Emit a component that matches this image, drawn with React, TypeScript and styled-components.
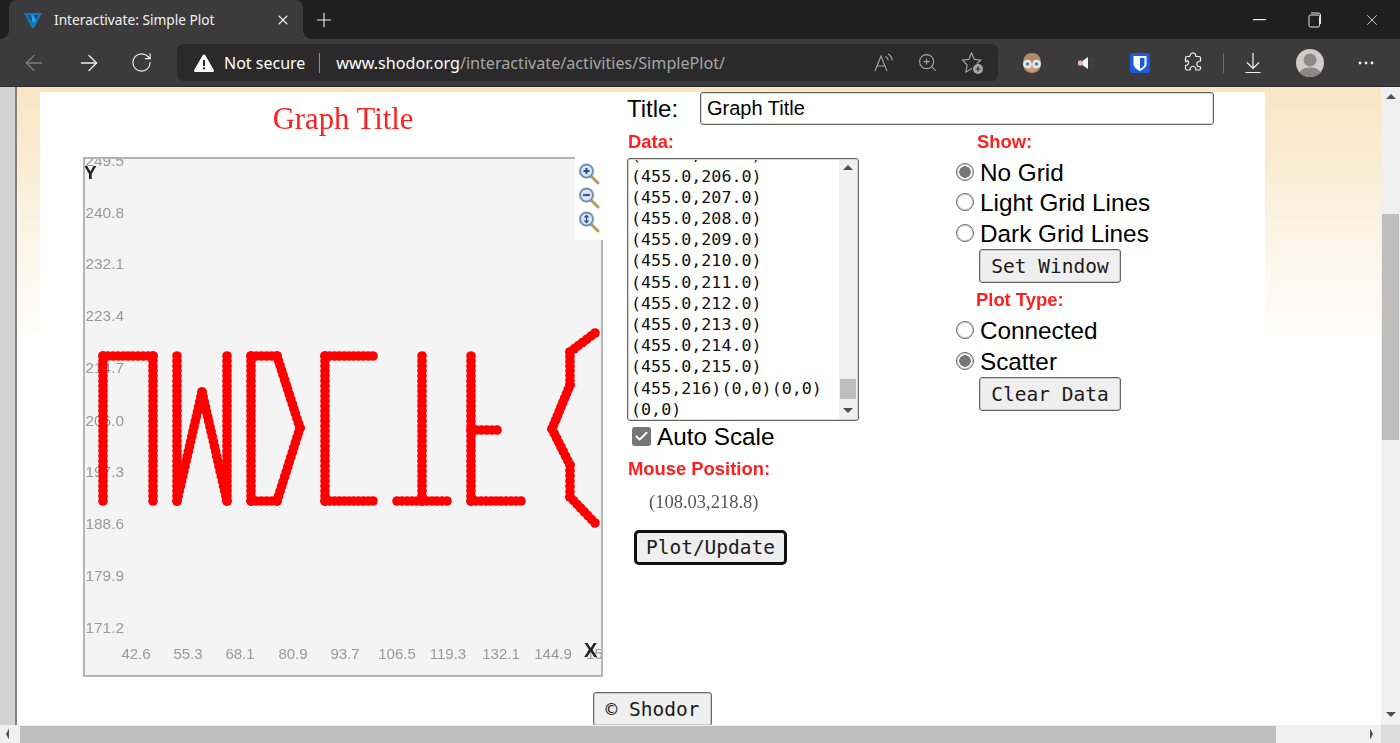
import React from 'react'
import styled, { createGlobalStyle } from 'styled-components'
import { ArrowLeft, ArrowRight, RotateCw, Plus, X, Check, ZoomIn } from 'lucide-react'

const GlobalStyle = createGlobalStyle`
  html, body {
    margin: 0;
    padding: 0;
    width: 1400px;
    height: 743px;
    overflow: hidden;
    background: #fff;
  }
  * { box-sizing: border-box; }
`

const MONO = `"DejaVu Sans Mono", "Liberation Mono", monospace`
const SANS = `"Liberation Sans", Arial, sans-serif`
const UI = `"Noto Sans", "Open Sans", sans-serif`

const Shell = styled.div`
  width: 1400px;
  height: 743px;
  display: flex;
  flex-direction: column;
  overflow: hidden;
  font-family: ${SANS};
`

/* browser chrome */
const TabStrip = styled.div`
  height: 39px;
  flex: none;
  background: #1f1f1f;
  display: flex;
  align-items: flex-end;
  padding-left: 9px;
  color: #fff;
`

const Tab = styled.div`
  position: relative;
  width: 294px;
  height: 39px;
  background: #3b3b3b;
  border-radius: 8px 8px 0 0;
  display: flex;
  align-items: center;
  padding-left: 15px;
  gap: 12px;

  &::before,
  &::after {
    content: '';
    position: absolute;
    bottom: 0;
    width: 8px;
    height: 8px;
  }
  &::before {
    left: -8px;
    background: radial-gradient(circle at 0 0, transparent 7.5px, #3b3b3b 8px);
  }
  &::after {
    right: -8px;
    background: radial-gradient(circle at 100% 0, transparent 7.5px, #3b3b3b 8px);
  }
`

const TabTitle = styled.span`
  flex: 1;
  font: 13.7px ${UI};
  color: #f2f2f2;
  white-space: nowrap;
`

const TabClose = styled.span`
  display: flex;
  margin-right: 12px;
`

const NewTab = styled.span`
  display: flex;
  margin: 0 0 8px 10px;
`

const WindowControls = styled.div`
  margin-left: auto;
  display: flex;
  align-items: center;
  height: 39px;
`

const WindowButton = styled.span<{ $w: number }>`
  width: ${p => p.$w}px;
  display: flex;
  justify-content: center;
`

const Toolbar = styled.div`
  height: 48px;
  flex: none;
  background: #3b3b3b;
  display: flex;
  align-items: center;
  border-bottom: 1px solid #2a2a2a;
`

const NavButton = styled.span<{ $w: number }>`
  width: ${p => p.$w}px;
  display: flex;
  justify-content: center;
  flex: none;
`

const AddressBar = styled.div`
  width: 821px;
  height: 37px;
  margin-left: 5px;
  background: #2a2a2a;
  border-radius: 6px;
  display: flex;
  align-items: center;
  padding-left: 17px;
  color: #fff;
  font: 16px ${UI};
`

const NotSecure = styled.span`
  margin-left: 10px;
  font-size: 16px;
  white-space: nowrap;
`

const Divider = styled.span`
  width: 1px;
  height: 20px;
  background: #8a8a8a;
  margin: 0 16px 0 14px;
`

const Url = styled.span`
  font-size: 16.15px;
  color: #fff;
  white-space: nowrap;
`

const UrlPath = styled.span`
  color: #a6a6a6;
`

const AddressIcons = styled.div`
  margin-left: auto;
  display: flex;
  align-items: center;
  gap: 23px;
  padding-right: 13px;
`

const ExtensionIcons = styled.div`
  display: flex;
  align-items: center;
`

const ExtensionSlot = styled.span<{ $w: number }>`
  width: ${p => p.$w}px;
  display: flex;
  justify-content: center;
  align-items: center;
  flex: none;
`

const ToolbarRule = styled.span`
  width: 1px;
  height: 20px;
  background: #6a6a6a;
  flex: none;
`

/* page viewport */
const Viewport = styled.div`
  flex: 1;
  min-height: 0;
  display: grid;
  grid-template-columns: 1381px 19px;
  grid-template-rows: 638px 18px;
`

const PageRow = styled.div`
  display: flex;
  overflow: hidden;
  min-height: 0;
`

const Gutter = styled.div`
  width: 17px;
  flex: none;
  background: #d3d3d3;
  border-right: 2px solid #808080;
`

const Page = styled.div`
  flex: 1;
  padding: 5px 0 0 23px;
  background: linear-gradient(#f9e5c2, #fefdfb) no-repeat;
  background-size: 100% 243px;
`

const Content = styled.div`
  width: 1225px;
  background: #fff;
`

const Columns = styled.div`
  display: flex;
  align-items: flex-start;
`

const PlotColumn = styled.div`
  width: 587px;
  padding-left: 43px;
  flex: none;
`

const GraphTitle = styled.h1`
  width: 520px;
  height: 52px;
  margin: 0 0 13px;
  padding-top: 2px;
  display: flex;
  align-items: center;
  justify-content: center;
  font: 400 30.7px "Liberation Serif", "Times New Roman", serif;
  color: #ff2020;
  filter: blur(0.3px);
`

const PlotBox = styled.div`
  position: relative;
  width: 520px;
  height: 520px;
  border: 2px solid #b4b4b4;
  background: #f4f4f4;
  overflow: visible;
`

const PlotSvg = styled.svg`
  display: block;
  filter: blur(0.45px);
`

const ZoomTools = styled.div`
  position: absolute;
  top: -2px;
  right: -2px;
  width: 28px;
  height: 83px;
  background: #fff;
  display: flex;
  flex-direction: column;
  align-items: center;
  gap: 1px;
  padding-top: 5px;
  filter: blur(0.4px);
`

const FormColumn = styled.div`
  flex: 1;
`

const TitleRow = styled.div`
  display: flex;
  align-items: center;
  height: 33px;
`

const TitleLabel = styled.label`
  width: 73px;
  font-size: 24px;
  color: #000;
`

const TitleInput = styled.input`
  width: 514px;
  height: 33px;
  border: 1px solid #666;
  box-shadow: inset 0 0 0 1px rgba(118, 118, 118, 0.3);
  border-radius: 3px;
  padding: 0 6px;
  font: 20px ${SANS};
  color: #000;
  background: #fff;
  outline: none;
`

const FormGrid = styled.div`
  display: grid;
  grid-template-columns: 329px 1fr;
`

const RedLabel = styled.div<{ $indent?: number; $mt?: number }>`
  height: 20px;
  line-height: 20px;
  font-weight: 700;
  font-size: 18.4px;
  color: #ff1f1f;
  padding-left: ${p => p.$indent ?? 1}px;
  margin-top: ${p => p.$mt ?? 0}px;
  filter: blur(0.35px);
  white-space: nowrap;
`

const DataCol = styled.div`
  padding-left: 0;
`

const DataBox = styled.div`
  width: 232px;
  height: 263px;
  margin-top: 6px;
  border: 1px solid #666;
  box-shadow: inset 0 0 0 1px rgba(118, 118, 118, 0.3);
  border-radius: 3px;
  display: flex;
  overflow: hidden;
  background: #fff;
  padding: 1px 1px 0;
`

const DataLines = styled.div`
  flex: 1;
  display: flex;
  flex-direction: column;
  justify-content: flex-end;
  overflow: hidden;
  padding: 0 0 0 2px;
  font: 16.7px/21.2px ${MONO};
  color: #111;
  white-space: pre;
`

const Scrollbar = styled.div`
  width: 18px;
  flex: none;
  background: #f0f0f0;
  display: flex;
  flex-direction: column;
  align-items: center;
  margin-bottom: 1px;
`

const ArrowCell = styled.div`
  height: 17px;
  flex: none;
  display: flex;
  align-items: center;
  justify-content: center;
`

const ScrollTrack = styled.div`
  flex: 1;
  align-self: stretch;
  display: flex;
  flex-direction: column;
  justify-content: flex-end;
  padding: 0 1px 3px;
`

const InnerThumb = styled.div`
  height: 20px;
  background: #bebebe;
`

const AutoRow = styled.label`
  display: flex;
  align-items: center;
  height: 30px;
  padding: 2px 0 0 5px;
  gap: 6px;
  font-size: 24.3px;
  color: #000;
`

const CheckMark = styled.span`
  width: 19px;
  height: 19px;
  border-radius: 3px;
  background: #767676;
  display: flex;
  align-items: center;
  justify-content: center;
  margin-top: -2px;
`

const MousePos = styled.div`
  height: 20px;
  margin-top: 13px;
  padding-left: 22px;
  font: 18.5px/20px "Liberation Serif", serif;
  color: #555;
  filter: blur(0.45px);
`

const MonoButton = styled.button<{ $focus?: boolean; $ml: number; $w: number }>`
  display: block;
  width: ${p => p.$w}px;
  height: ${p => (p.$focus ? 35 : 34)}px;
  margin-left: ${p => p.$ml}px;
  padding: 0;
  border: ${p => (p.$focus ? '3px solid #111' : '1px solid #666')};
  box-shadow: ${p => (p.$focus ? 'none' : 'inset 0 0 0 1px rgba(118, 118, 118, 0.3)')};
  border-radius: ${p => (p.$focus ? 5 : 3)}px;
  background: #efefef;
  color: #1a1a1a;
  font: 19.5px ${MONO};
  white-space: nowrap;
`

const PlotButtonWrap = styled.div`
  margin-top: 18px;
`

const ShowCol = styled.div`
  padding-top: 7px;
`

const RadioRow = styled.label`
  display: flex;
  align-items: center;
  height: 30.5px;
  gap: 6px;
  font-size: 24.3px;
  color: #000;
  white-space: nowrap;
`

const Radio = styled.input.attrs({ type: 'radio' })`
  appearance: none;
  width: 18px;
  height: 18px;
  margin: -2px 0 0;
  border: 1px solid #666;
  box-shadow: inset 0 0 0 1px rgba(118, 118, 118, 0.3);
  border-radius: 50%;
  background: #fff;

  &:checked {
    background: radial-gradient(circle, #767676 0 5.5px, #fff 6px);
  }
`

const RadioGroup = styled.div<{ $mt: number }>`
  margin-top: ${p => p.$mt}px;
`

const Footer = styled.div`
  display: flex;
  justify-content: center;
  margin-top: 15px;
`

const VBar = styled.div`
  background: #f0f0f0;
  display: flex;
  flex-direction: column;
  align-items: center;
  padding-top: 5px;
`

const VThumbSpace = styled.div`
  height: 110px;
  flex: none;
`

const VThumb = styled.div`
  width: 17px;
  height: 226px;
  flex: none;
  align-self: flex-start;
  margin-left: 1px;
  background: #bebebe;
`

const VEnd = styled.div`
  margin-top: auto;
  padding-bottom: 4px;
  display: flex;
`

const HBar = styled.div`
  background: #f0f0f0;
  display: flex;
  align-items: center;
  padding-left: 2px;
`

const HThumb = styled.div`
  width: 1256px;
  height: 17px;
  margin-left: 6px;
  background: #bebebe;
`

const HEnd = styled.div`
  margin-left: auto;
  padding-right: 4px;
  display: flex;
`

const Corner = styled.div`
  background: #dcdcdc;
`

type Pt = [number, number]

const PATHS: Pt[][] = [
  [[103, 501], [103, 356], [153, 356], [153, 501]],
  [[177, 356], [177, 501], [202, 392], [227, 501], [227, 356]],
  [[251, 356], [277, 356], [300, 428], [277, 501], [251, 501], [251, 356]],
  [[373, 356], [325, 356], [325, 501], [373, 501]],
  [[422, 356], [422, 501]],
  [[397, 501], [447, 501]],
  [[471, 356], [471, 501], [521, 501]],
  [[471, 430], [497, 430]],
  [[595, 333], [570, 352], [570, 385], [552, 429], [570, 465], [570, 497], [595, 523]],
]

const sample = (pts: Pt[], step = 5): Pt[] => {
  const out: Pt[] = []
  for (let i = 0; i < pts.length - 1; i++) {
    const [x1, y1] = pts[i]
    const [x2, y2] = pts[i + 1]
    const n = Math.max(1, Math.round(Math.hypot(x2 - x1, y2 - y1) / step))
    for (let k = 0; k <= n; k++) out.push([x1 + ((x2 - x1) * k) / n, y1 + ((y2 - y1) * k) / n])
  }
  return out
}

const Y_LABELS: [string, number][] = [
  ['249.5', 161], ['240.8', 213], ['232.1', 264], ['223.4', 316], ['214.7', 368],
  ['206.0', 421], ['197.3', 472], ['188.6', 524], ['179.9', 576], ['171.2', 628],
]

const X_LABELS: [string, number][] = [
  ['42.6', 136], ['55.3', 188], ['68.1', 240], ['80.9', 293], ['93.7', 345],
  ['106.5', 397], ['119.3', 448], ['132.1', 501], ['144.9', 553], ['157.7', 605],
]

const Lens = ({ kind }: { kind: 'plus' | 'minus' | 'fit' }) => (
  <svg width="22" height="23" viewBox="0 0 22 23">
    <path d="M13 14l7 7" stroke="#b59a5c" strokeWidth="3" strokeLinecap="round" />
    <circle cx="8.5" cy="9" r="6.5" fill="#dbe6f5" stroke="#6f8fb8" strokeWidth="2" />
    {kind === 'plus' && <path d="M5.5 9h6M8.5 6v6" stroke="#24508f" strokeWidth="2" />}
    {kind === 'minus' && <path d="M5 9h7" stroke="#3d5f8f" strokeWidth="2.2" />}
    {kind === 'fit' && <path d="M8.5 5.5v7M6.5 7.5l2-2 2 2M6.5 10.5l2 2 2-2" stroke="#24508f" strokeWidth="1.3" fill="none" />}
  </svg>
)

const Plot = () => (
  <PlotBox>
    <PlotSvg width="516" height="516" viewBox="85 159 516 516">
      {Y_LABELS.map(([t, y]) => (
        <text key={t} x="124" y={y + 5} textAnchor="end" fontFamily={SANS} fontSize="15.4" fill="#999">
          {t}
        </text>
      ))}
      {X_LABELS.map(([t, x]) => (
        <text key={t} x={x} y="659" textAnchor="middle" fontFamily={SANS} fontSize="15" fill="#999">
          {t}
        </text>
      ))}
      <text x="84" y="179" fontFamily={SANS} fontSize="19" fontWeight="700" fill="#222">Y</text>
      <text x="584" y="657" fontFamily={SANS} fontSize="20" fontWeight="700" fill="#222">X</text>
      {PATHS.flatMap((p, i) =>
        sample(p).map(([x, y], k) => <circle key={`${i}-${k}`} cx={x} cy={y} r="4.8" fill="#ff0000" />),
      )}
    </PlotSvg>
    <ZoomTools>
      <Lens kind="plus" />
      <Lens kind="minus" />
      <Lens kind="fit" />
    </ZoomTools>
  </PlotBox>
)

const Triangle = ({ dir }: { dir: 'up' | 'down' | 'left' | 'right' }) => {
  const d = {
    up: 'M1 7L6 2l5 5z',
    down: 'M1 3l5 5 5-5z',
    left: 'M7 0.5v11L4 6z',
    right: 'M5 0.5v11L8 6z',
  }[dir]
  return (
    <svg width="12" height="12" viewBox="0 0 12 12">
      <path d={d} fill="#505050" />
    </svg>
  )
}

const Favicon = () => (
  <svg width="18" height="18" viewBox="0 0 18 18">
    <path d="M0 2h18L10 17H8z" fill="#1179c4" />
    <path d="M3.500 4h11L9 13z" fill="#0c4f85" />
    <path d="M9 13L7 4h2l3 5z" fill="#28a4e8" />
  </svg>
)

const RestoreIcon = () => (
  <svg width="14" height="16" viewBox="0 0 14 16" fill="none" stroke="#e6e6e6" strokeWidth="1">
    <rect x="1" y="3" width="10.500" height="12" rx="1.500" />
    <path d="M3 1h7.500a2 2 0 0 1 2 2v9" />
  </svg>
)

const MinimizeIcon = () => (
  <svg width="13" height="2" viewBox="0 0 13 2">
    <rect width="13" height="1.200" fill="#f0f0f0" />
  </svg>
)

const WarnIcon = () => (
  <svg width="20" height="18" viewBox="0 0 20 18">
    <path d="M10 0.500a1.500 1.500 0 0 1 1.300.8l8.400 14.500a1.400 1.400 0 0 1-1.200 2.200H1.500a1.400 1.400 0 0 1-1.200-2.200L8.700 1.300A1.500 1.500 0 0 1 10 0.500z" fill="#fff" />
    <path d="M9 6h2v6H9zM9 13.300h2v2H9z" fill="#2a2a2a" />
  </svg>
)

const ReadAloudIcon = () => (
  <svg width="20" height="20" viewBox="0 0 20 20" fill="none" stroke="#a8a8a8" strokeWidth="1.100">
    <path d="M1 18L7 3l6 15M3.200 13h7.600" />
    <path d="M11.500 3.500c1.600.8 2.600 2.200 2.800 4M14 1c2.400 1.200 4 3.400 4.200 6.500" />
  </svg>
)

const StarAddIcon = () => (
  <svg width="24" height="24" viewBox="0 0 24 24" fill="none">
    <path d="M11 17.500L4.800 21l1.400-7-4.700-4.800 6.500-.9L10.500 2l2.800 6.300 6.500.9-3.800 3.300" stroke="#a8a8a8" strokeWidth="1.100" />
    <circle cx="17" cy="18" r="5" fill="#a8a8a8" />
    <path d="M17 15.500v5M14.500 18h5" stroke="#2a2a2a" strokeWidth="1.200" />
  </svg>
)

const AvatarIcon = () => (
  <svg width="22" height="24" viewBox="0 0 22 24">
    <path d="M2 12C2 5 6 2 11 2s9 3 9 10-4 10-9 10S2 19 2 12z" fill="#b08a63" />
    <path d="M5 13c0 5 3 8 6 8s6-3 6-8z" fill="#d99a78" />
    <circle cx="6.500" cy="13" r="3.600" fill="#b7dbe0" stroke="#eef5f5" strokeWidth="1.400" />
    <circle cx="15.500" cy="13" r="3.600" fill="#b7dbe0" stroke="#eef5f5" strokeWidth="1.400" />
    <circle cx="6.500" cy="13" r="1.200" fill="#3a4a50" />
    <circle cx="15.500" cy="13" r="1.200" fill="#3a4a50" />
  </svg>
)

const SpeakerIcon = () => (
  <svg width="18" height="14" viewBox="-2 0 18 14">
    <rect x="1" y="4.500" width="5" height="5" rx="1.500" fill="#efb7c0" />
    <path d="M6 4.500L11 1v12L6 9.500z" fill="#f4f4f4" />
    <path d="M13 5l2-1M13 9l2 1" stroke="#555" strokeWidth="1" />
  </svg>
)

const BitwardenIcon = () => (
  <svg width="20" height="20" viewBox="0 0 20 20">
    <rect width="20" height="20" rx="2" fill="#175ddc" />
    <path d="M3.500 3h13v8c0 3.500-3.500 5.500-6.500 7-3-1.500-6.500-3.500-6.500-7z" fill="#fff" />
    <path d="M10 5h4.500v6c0 2-2.500 3.800-4.500 4.800z" fill="#175ddc" />
  </svg>
)

const PuzzleIcon = () => (
  <svg width="20" height="21" viewBox="0 0 20 21" fill="none" stroke="#f2f2f2" strokeWidth="1.200">
    <path d="M7 3.500a3 3 0 0 1 5.500-1.200c.5 1 0 1.700.5 2.200h3c1 0 1.500.5 1.500 1.500v3c-.5.500-1.200 0-2.200.5a2.800 2.800 0 0 0 0 5c1 .5 1.700 0 2.200.5v1.500c0 1-.5 1.500-1.500 1.500h-3c-.5-.5 0-1.200-.5-2.200a2.800 2.800 0 0 0-5 0c-.5 1 0 1.700-.5 2.200H4c-1 0-1.500-.5-1.500-1.500v-3c.5-.5 1.200 0 2-.7a2.700 2.700 0 0 0 0-4.300C3.700 9.500 3 10 2.500 9.500V6c0-1 .5-1.500 1.500-1.500h2.500c.5-.2.500-.5.500-1z" />
  </svg>
)

const DownloadIcon = () => (
  <svg width="18" height="22" viewBox="0 0 18 22" fill="none" stroke="#f2f2f2" strokeWidth="1.200">
    <path d="M9 1v15M3 10.500l6 6 6-6M1.500 20.500h15" />
  </svg>
)

const ProfileIcon = () => (
  <svg width="28" height="28" viewBox="0 0 28 28">
    <circle cx="14" cy="14" r="14" fill="#cfcdca" />
    <circle cx="14" cy="11" r="6.500" fill="#8b8986" />
    <path d="M3.500 23.500C5.500 19.500 9.500 18.500 14 18.500s8.500 1 10.500 5a14 14 0 0 1-21 0z" fill="#8b8986" />
  </svg>
)

const MoreIcon = () => (
  <svg width="16" height="4" viewBox="0 0 16 4">
    <circle cx="2" cy="2" r="1.400" fill="#f2f2f2" />
    <circle cx="8" cy="2" r="1.400" fill="#f2f2f2" />
    <circle cx="14" cy="2" r="1.400" fill="#f2f2f2" />
  </svg>
)

const DATA_LINES = [
  '(455.0,205.0)',
  '(455.0,206.0)',
  '(455.0,207.0)',
  '(455.0,208.0)',
  '(455.0,209.0)',
  '(455.0,210.0)',
  '(455.0,211.0)',
  '(455.0,212.0)',
  '(455.0,213.0)',
  '(455.0,214.0)',
  '(455.0,215.0)',
  '(455,216)(0,0)(0,0)',
  '(0,0)',
]

export default function App() {
  return (
    <Shell>
      <GlobalStyle />
      <TabStrip>
        <Tab>
          <Favicon />
          <TabTitle>Interactivate: Simple Plot</TabTitle>
          <TabClose>
            <X size={16} color="#f0f0f0" strokeWidth={1.6} />
          </TabClose>
        </Tab>
        <NewTab>
          <Plus size={22} color="#f0f0f0" strokeWidth={1.2} />
        </NewTab>
        <WindowControls>
          <WindowButton $w={56}><MinimizeIcon /></WindowButton>
          <WindowButton $w={56}><RestoreIcon /></WindowButton>
          <WindowButton $w={57}><X size={18} color="#e6e6e6" strokeWidth={1.1} /></WindowButton>
        </WindowControls>
      </TabStrip>
      <Toolbar>
        <NavButton $w={68}><ArrowLeft size={26} color="#7d7d7d" strokeWidth={1.2} /></NavButton>
        <NavButton $w={42}><ArrowRight size={26} color="#f0f0f0" strokeWidth={1.2} /></NavButton>
        <NavButton $w={62}><RotateCw size={23} color="#f0f0f0" strokeWidth={1.2} /></NavButton>
        <AddressBar>
          <WarnIcon />
          <NotSecure>Not secure</NotSecure>
          <Divider />
          <Url>
            www.shodor.org<UrlPath>/interactivate/activities/SimplePlot/</UrlPath>
          </Url>
          <AddressIcons>
            <ReadAloudIcon />
            <ZoomIn size={21} color="#a8a8a8" strokeWidth={1.2} />
            <StarAddIcon />
          </AddressIcons>
        </AddressBar>
        <ExtensionIcons>
          <ExtensionSlot $w={68}><AvatarIcon /></ExtensionSlot>
          <ExtensionSlot $w={36}><SpeakerIcon /></ExtensionSlot>
          <ExtensionSlot $w={76}><BitwardenIcon /></ExtensionSlot>
          <ExtensionSlot $w={30}><PuzzleIcon /></ExtensionSlot>
          <ExtensionSlot $w={31}><ToolbarRule /></ExtensionSlot>
          <ExtensionSlot $w={27}><DownloadIcon /></ExtensionSlot>
          <ExtensionSlot $w={87}><ProfileIcon /></ExtensionSlot>
          <ExtensionSlot $w={26}><MoreIcon /></ExtensionSlot>
        </ExtensionIcons>
      </Toolbar>
      <Viewport>
        <PageRow>
          <Gutter />
          <Page>
            <Content>
              <Columns>
                <PlotColumn>
                  <GraphTitle>Graph Title</GraphTitle>
                  <Plot />
                </PlotColumn>
                <FormColumn>
                  <TitleRow>
                    <TitleLabel>Title:</TitleLabel>
                    <TitleInput defaultValue="Graph Title" />
                  </TitleRow>
                  <FormGrid>
                    <DataCol>
                      <RedLabel $mt={7}>Data:</RedLabel>
                      <DataBox>
                        <DataLines>
                          {DATA_LINES.map(l => (
                            <div key={l}>{l}</div>
                          ))}
                        </DataLines>
                        <Scrollbar>
                          <ArrowCell><Triangle dir="up" /></ArrowCell>
                          <ScrollTrack><InnerThumb /></ScrollTrack>
                          <ArrowCell><Triangle dir="down" /></ArrowCell>
                        </Scrollbar>
                      </DataBox>
                      <AutoRow>
                        <CheckMark><Check size={15} color="#fff" strokeWidth={3.2} /></CheckMark>
                        Auto Scale
                      </AutoRow>
                      <RedLabel $mt={8}>Mouse Position:</RedLabel>
                      <MousePos>(108.03,218.8)</MousePos>
                      <PlotButtonWrap>
                        <MonoButton $focus $ml={7} $w={153}>Plot/Update</MonoButton>
                      </PlotButtonWrap>
                    </DataCol>
                    <ShowCol>
                      <RedLabel $indent={21}>Show:</RedLabel>
                      <RadioGroup $mt={5.5}>
                        <RadioRow><Radio name="grid" defaultChecked />No Grid</RadioRow>
                        <RadioRow><Radio name="grid" />Light Grid Lines</RadioRow>
                        <RadioRow><Radio name="grid" />Dark Grid Lines</RadioRow>
                      </RadioGroup>
                      <MonoButton $ml={23} $w={142}>Set Window</MonoButton>
                      <RedLabel $indent={20} $mt={7}>Plot Type:</RedLabel>
                      <RadioGroup $mt={6}>
                        <RadioRow><Radio name="plot" />Connected</RadioRow>
                        <RadioRow><Radio name="plot" defaultChecked />Scatter</RadioRow>
                      </RadioGroup>
                      <MonoButton $ml={23} $w={142}>Clear Data</MonoButton>
                    </ShowCol>
                  </FormGrid>
                </FormColumn>
              </Columns>
              <Footer>
                <MonoButton $ml={0} $w={119}>© Shodor</MonoButton>
              </Footer>
            </Content>
          </Page>
        </PageRow>
        <VBar>
          <Triangle dir="up" />
          <VThumbSpace />
          <VThumb />
          <VEnd><Triangle dir="down" /></VEnd>
        </VBar>
        <HBar>
          <Triangle dir="left" />
          <HThumb />
          <HEnd><Triangle dir="right" /></HEnd>
        </HBar>
        <Corner />
      </Viewport>
    </Shell>
  )
}
